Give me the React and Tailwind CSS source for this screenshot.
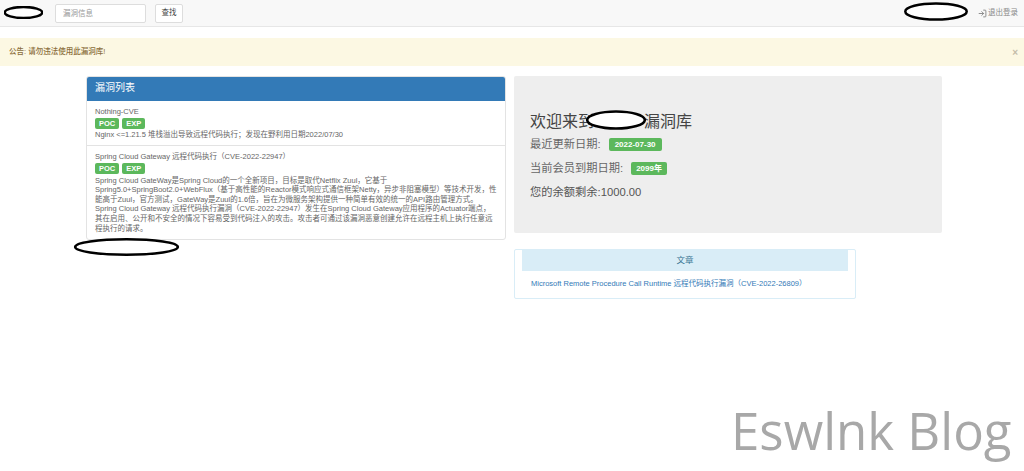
import React from "react";
import { LogIn } from "lucide-react";

const FONT = { fontFamily: '"Liberation Sans", "Noto Sans CJK SC", sans-serif' };

const Scribble = ({ className }) => (
  <svg className={`absolute ${className}`} viewBox="0 0 100 40" preserveAspectRatio="none">
    <ellipse cx="50" cy="20" rx="48" ry="17" fill="#fff" stroke="#000" vectorEffect="non-scaling-stroke" style={{ strokeWidth: 2.5 }} />
  </svg>
);

const Tags = () => (
  <div className="flex gap-[3px] my-[1px]">
    <span className="h-[11px] px-[4px] rounded-[2px] bg-[#5cb85c] text-white text-[7.5px] leading-[11px] font-bold">POC</span>
    <span className="h-[11px] px-[4px] rounded-[2px] bg-[#5cb85c] text-white text-[7.5px] leading-[11px] font-bold">EXP</span>
  </div>
);

export default function App() {
  return (
    <div className="relative w-[1024px] h-[471px] overflow-hidden bg-white text-[#666]" style={FONT}>
      <div className="h-[27px] bg-[#f8f8f8] border-b border-[#e7e7e7] flex items-center">
        <input
          readOnly
          placeholder="漏洞信息"
          className="ml-[55px] w-[91px] h-[19px] px-[7px] bg-white border border-[#ddd] rounded-[2px] text-[7.5px] placeholder:text-[#999] outline-none"
        />
        <button className="ml-[9px] w-[28px] h-[19px] bg-white border border-[#ddd] rounded-[2px] text-[7.5px] text-[#444]">查找</button>
        <div className="ml-auto mr-[6px] flex items-center gap-[1px] text-[7.5px] text-[#888]">
          <LogIn size={9} strokeWidth={2.5} />
          <span>退出登录</span>
        </div>
      </div>

      <div className="mt-[11px] h-[28px] pl-[9px] pr-[6px] bg-[#fcf8e3] flex items-center justify-between text-[7.5px] text-[#8a6d3b]">
        <span className="font-medium">公告: 请勿违法使用此漏洞库!</span>
        <span className="text-[10px] font-bold text-[#c4bdaa]">×</span>
      </div>

      <div className="mt-[10px] pl-[86px] flex items-start gap-[8px]">
        <div className="w-[420px] h-[164px] bg-white border border-[#e3e3e3] rounded-[3px] overflow-hidden">
          <div className="h-[25px] -mx-px -mt-px px-[9px] bg-[#337ab7] text-white text-[10px] leading-[23px]">漏洞列表</div>
          <div className="h-[45px] px-[8px] pt-[6px] border-b border-[#e3e3e3] text-[7.5px] leading-[10px]">
            <div>Nothing-CVE</div>
            <Tags />
            <div>Nginx &lt;=1.21.5 堆栈溢出导致远程代码执行；发现在野利用日期2022/07/30</div>
          </div>
          <div className="px-[8px] pt-[6px] text-[7.5px] leading-[9.6px]">
            <div>Spring Cloud Gateway 远程代码执行（CVE-2022-22947）</div>
            <div className="mb-[2px]">
              <Tags />
            </div>
            <div className="whitespace-nowrap">Spring Cloud GateWay是Spring Cloud的一个全新项目，目标是取代Netflix Zuul，它基于</div>
            <div className="whitespace-nowrap">Spring5.0+SpringBoot2.0+WebFlux（基于高性能的Reactor模式响应式通信框架Netty，异步非阻塞模型）等技术开发，性</div>
            <div className="whitespace-nowrap">能高于Zuul，官方测试，GateWay是Zuul的1.6倍，旨在为微服务架构提供一种简单有效的统一的API路由管理方式。</div>
            <div className="whitespace-nowrap">Spring Cloud Gateway 远程代码执行漏洞（CVE-2022-22947）发生在Spring Cloud Gateway应用程序的Actuator端点，</div>
            <div className="whitespace-nowrap">其在启用、公开和不安全的情况下容易受到代码注入的攻击。攻击者可通过该漏洞恶意创建允许在远程主机上执行任意远</div>
            <div className="whitespace-nowrap">程执行的请求。</div>
          </div>
        </div>

        <div className="w-[428px]">
          <div className="h-[157px] bg-[#eee] rounded-[2px] pl-[16px] pt-[36px] text-[#444]">
            <div className="flex text-[16px] leading-[20px]">
              <span>欢迎来到</span>
              <span className="w-[50px]"></span>
              <span>漏洞库</span>
            </div>
            <div className="mt-[5px] flex items-center gap-[8px] h-[14px] text-[11.25px]">
              <span className="text-[#666]">最近更新日期:</span>
              <span className="h-[13px] px-[6px] rounded-[2px] bg-[#5cb85c] text-white text-[8px] leading-[13px] font-bold">2022-07-30</span>
            </div>
            <div className="mt-[10px] flex items-center gap-[8px] h-[14px] text-[11.25px]">
              <span className="text-[#666]">当前会员到期日期:</span>
              <span className="h-[13px] px-[5px] rounded-[2px] bg-[#5cb85c] text-white text-[8px] leading-[13px] font-bold">2099年</span>
            </div>
            <div className="mt-[10px] text-[11.25px] leading-[14px] text-[#555]">您的余额剩余:1000.00</div>
          </div>

          <div className="mt-[16px] w-[342px] h-[50px] bg-white border border-[#d9edf7] rounded-[2px] px-[7px]">
            <div className="h-[21px] bg-[#d9edf7] text-center text-[8.5px] leading-[21px] text-[#31708f]">文章</div>
            <div className="mt-[8px] ml-[9px] text-[7.5px] leading-[10px] text-[#337ab7] whitespace-nowrap">Microsoft Remote Procedure Call Runtime 远程代码执行漏洞（CVE-2022-26809）</div>
          </div>
        </div>
      </div>

      <Scribble className="left-[4px] top-[6px] w-[39px] h-[13px]" />
      <Scribble className="left-[904px] top-[2px] w-[64px] h-[19px]" />
      <Scribble className="left-[73px] top-[238px] w-[107px] h-[18px]" />
      <Scribble className="left-[586px] top-[110px] w-[60px] h-[20px]" />

      <div className="absolute left-[731px] top-[397px] text-[51px] leading-[66px] text-[#a8a8a8] whitespace-nowrap" style={{ fontFamily: '"Open Sans", sans-serif' }}>
        Eswlnk Blog
      </div>
    </div>
  );
}
